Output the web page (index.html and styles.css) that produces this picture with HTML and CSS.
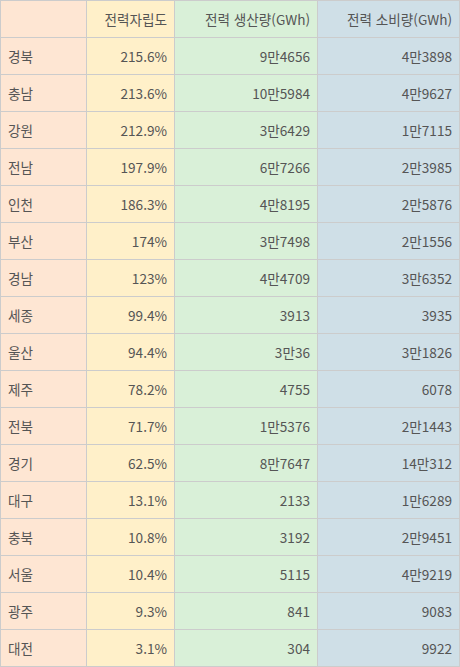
FILE: index.html
```html
<!DOCTYPE html>
<html lang="ko">
<head>
<meta charset="utf-8">
<link rel="stylesheet" href="styles.css">
</head>
<body>
<div class="table">
  <div class="c name"></div><div class="c rate">전력자립도</div><div class="c prod">전력 생산량(GWh)</div><div class="c cons">전력 소비량(GWh)</div>
  <div class="c name">경북</div><div class="c rate">215.6%</div><div class="c prod">9만4656</div><div class="c cons">4만3898</div>
  <div class="c name">충남</div><div class="c rate">213.6%</div><div class="c prod">10만5984</div><div class="c cons">4만9627</div>
  <div class="c name">강원</div><div class="c rate">212.9%</div><div class="c prod">3만6429</div><div class="c cons">1만7115</div>
  <div class="c name">전남</div><div class="c rate">197.9%</div><div class="c prod">6만7266</div><div class="c cons">2만3985</div>
  <div class="c name">인천</div><div class="c rate">186.3%</div><div class="c prod">4만8195</div><div class="c cons">2만5876</div>
  <div class="c name">부산</div><div class="c rate">174%</div><div class="c prod">3만7498</div><div class="c cons">2만1556</div>
  <div class="c name">경남</div><div class="c rate">123%</div><div class="c prod">4만4709</div><div class="c cons">3만6352</div>
  <div class="c name">세종</div><div class="c rate">99.4%</div><div class="c prod">3913</div><div class="c cons">3935</div>
  <div class="c name">울산</div><div class="c rate">94.4%</div><div class="c prod">3만36</div><div class="c cons">3만1826</div>
  <div class="c name">제주</div><div class="c rate">78.2%</div><div class="c prod">4755</div><div class="c cons">6078</div>
  <div class="c name">전북</div><div class="c rate">71.7%</div><div class="c prod">1만5376</div><div class="c cons">2만1443</div>
  <div class="c name">경기</div><div class="c rate">62.5%</div><div class="c prod">8만7647</div><div class="c cons">14만312</div>
  <div class="c name">대구</div><div class="c rate">13.1%</div><div class="c prod">2133</div><div class="c cons">1만6289</div>
  <div class="c name">충북</div><div class="c rate">10.8%</div><div class="c prod">3192</div><div class="c cons">2만9451</div>
  <div class="c name">서울</div><div class="c rate">10.4%</div><div class="c prod">5115</div><div class="c cons">4만9219</div>
  <div class="c name">광주</div><div class="c rate">9.3%</div><div class="c prod">841</div><div class="c cons">9083</div>
  <div class="c name">대전</div><div class="c rate">3.1%</div><div class="c prod">304</div><div class="c cons">9922</div>
</div>
</body>
</html>
```
FILE: styles.css
```css
html, body {
  margin: 0;
  padding: 0;
  background: #ffffff;
}
.table {
  display: grid;
  grid-template-columns: 85px 87px 142px 141px;
  grid-auto-rows: 36px;
  gap: 1px;
  padding: 1px;
  width: 460px;
  box-sizing: border-box;
  background: #cccccc;
  font-family: "Noto Sans CJK KR", "Noto Sans", sans-serif;
  font-size: 13.6px;
  color: #555555;
}
.c {
  display: flex;
  align-items: center;
  padding: 0 7px;
  white-space: nowrap;
}
.name {
  background: #fee6d3;
  justify-content: flex-start;
}
.rate {
  background: #fff0c9;
  justify-content: flex-end;
}
.prod {
  background: #d9f0d8;
  justify-content: flex-end;
}
.cons {
  background: #cfdfe7;
  justify-content: flex-end;
}
```
